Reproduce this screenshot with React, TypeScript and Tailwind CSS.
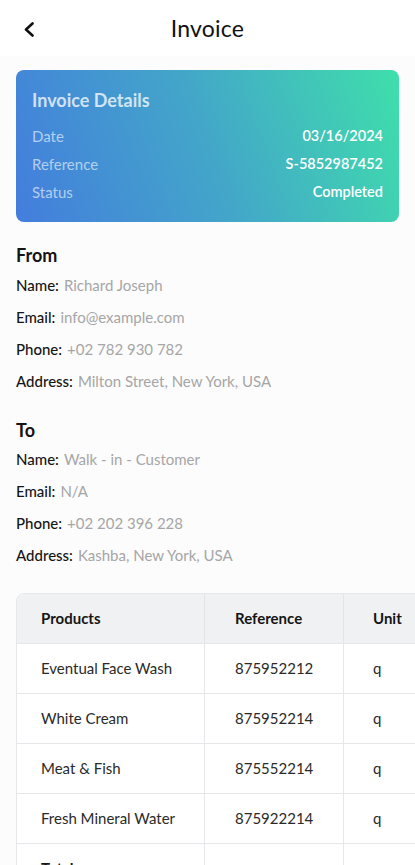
import React from "react";

const fromDetails = [
  { label: "Name:", value: "Richard Joseph" },
  { label: "Email:", value: "info@example.com" },
  { label: "Phone:", value: "+02 782 930 782" },
  { label: "Address:", value: "Milton Street, New York, USA" },
];

const toDetails = [
  { label: "Name:", value: "Walk - in - Customer" },
  { label: "Email:", value: "N/A" },
  { label: "Phone:", value: "+02 202 396 228" },
  { label: "Address:", value: "Kashba, New York, USA" },
];

const products = [
  { name: "Eventual Face Wash", reference: "875952212", unit: "q" },
  { name: "White Cream", reference: "875952214", unit: "q" },
  { name: "Meat & Fish", reference: "875552214", unit: "q" },
  { name: "Fresh Mineral Water", reference: "875922214", unit: "q" },
];

const PartySection = ({
  title,
  details,
  className,
}: {
  title: string;
  details: { label: string; value: string }[];
  className: string;
}) => {
  return (
    <div className={`px-4 ${className}`}>
      <h2 className="text-[18px] leading-7 font-bold text-[#141414]">{title}</h2>
      <div className="flex flex-col gap-3">
        {details.map((item) => (
          <div key={item.label} className="flex flex-row items-center gap-[5px] text-[15px] leading-5">
            <span className="font-medium text-[#151515]">{item.label}</span>
            <span className="text-[#a6a6a6]">{item.value}</span>
          </div>
        ))}
      </div>
    </div>
  );
};

const App = () => {
  return (
    <div
      className="w-full h-screen overflow-hidden bg-[#fcfcfc]"
      style={{ fontFamily: "Lato, 'Noto Sans', sans-serif" }}
    >
      {/* header */}
      <div className="relative h-14 flex items-center justify-center bg-white">
        <button className="absolute left-[23px] top-[22px] w-3 h-[15px]">
          <svg viewBox="0 0 12 15" width="12" height="15" fill="none">
            <polyline
              points="9.5,1.5 3,7.5 9.5,13.5"
              stroke="#111"
              strokeWidth="2.6"
              strokeLinecap="round"
              strokeLinejoin="round"
            />
          </svg>
        </button>
        <h1 className="text-[23px] font-normal text-[#111] tracking-[0.2px]">Invoice</h1>
      </div>

      {/* invoice card */}
      <div className="px-4 pt-[14px]">
        <div className="rounded-lg bg-[linear-gradient(70deg,#437ddd_0%,#43a6c9_50%,#3fdfab_100%)] px-4 pt-4 pb-5">
          <h3 className="text-[18px] leading-7 font-bold text-white/75">Invoice Details</h3>
          <div className="mt-3 flex flex-col gap-2 text-[15px] leading-5">
            <div className="flex flex-row justify-between">
              <span className="text-white/60">Date</span>
              <span className="text-white font-semibold text-[14.5px]">03/16/2024</span>
            </div>
            <div className="flex flex-row justify-between">
              <span className="text-white/60">Reference</span>
              <span className="text-white font-semibold text-[14.5px]">S-5852987452</span>
            </div>
            <div className="flex flex-row justify-between">
              <span className="text-white/60">Status</span>
              <span className="text-white font-semibold text-[14.5px]">Completed</span>
            </div>
          </div>
        </div>
      </div>

      <PartySection title="From" details={fromDetails} className="mt-[19px] [&>div]:mt-[6px]" />
      <PartySection title="To" details={toDetails} className="mt-[25px] [&>div]:mt-[5px]" />

      {/* products table */}
      <div className="mt-7 pl-4 overflow-hidden">
        <div className="w-[460px] border border-[#e6e7ea] rounded-tl-lg overflow-hidden text-[15px]">
          <div className="flex flex-row h-[49px] bg-[#f0f1f3] font-bold text-[#151515]">
            <div className="w-[188px] flex items-center pl-6 border-r border-[#e3e4e7]">Products</div>
            <div className="w-[139px] flex items-center pl-[30px] border-r border-[#e3e4e7]">Reference</div>
            <div className="flex-1 flex items-center pl-[29px]">Unit</div>
          </div>
          {products.map((product) => (
            <div key={product.name} className="flex flex-row h-[50px] border-t border-[#e6e7ea] bg-white text-[#2a2a2a]">
              <div className="w-[188px] flex items-center pl-6 border-r border-[#e6e7ea]">{product.name}</div>
              <div className="w-[139px] flex items-center pl-[30px] border-r border-[#e6e7ea]">{product.reference}</div>
              <div className="flex-1 flex items-center pl-[29px]">{product.unit}</div>
            </div>
          ))}
          <div className="flex flex-row h-[50px] border-t border-[#e6e7ea] bg-white font-bold text-[#151515]">
            <div className="w-[188px] flex items-center pl-6 border-r border-[#e6e7ea]">Total</div>
            <div className="w-[139px] flex items-center pl-[30px] border-r border-[#e6e7ea]"></div>
            <div className="flex-1 flex items-center pl-[29px]"></div>
          </div>
        </div>
      </div>
    </div>
  );
};

export default App;
